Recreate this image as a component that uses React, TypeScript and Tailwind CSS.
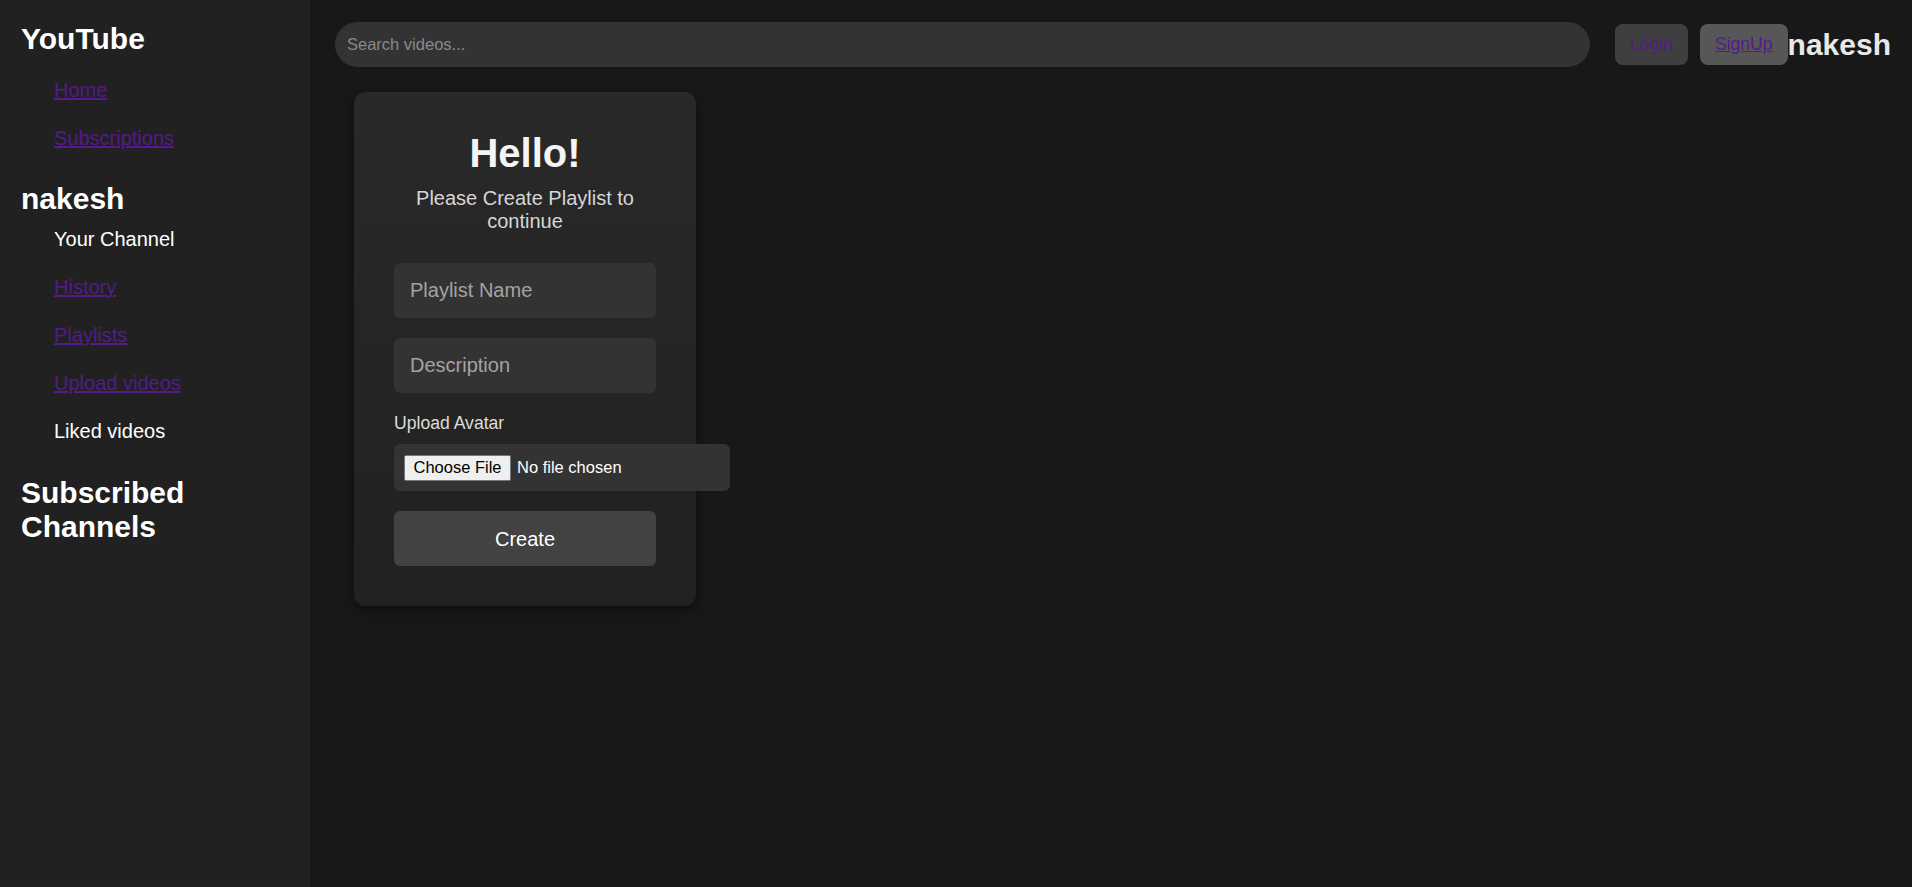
import { useState } from 'react'

const menuTop = [
  { label: 'Home', link: true },
  { label: 'Subscriptions', link: true },
]

const menuUser = [
  { label: 'Your Channel', link: false },
  { label: 'History', link: true },
  { label: 'Playlists', link: true },
  { label: 'Upload videos', link: true },
  { label: 'Liked videos', link: false },
]

function MenuList({ items, className }: { items: { label: string; link: boolean }[]; className: string }) {
  return (
    <ul className={`flex flex-col gap-[25px] pl-[33px] ${className}`}>
      {items.map((item) =>
        <li key={item.label} className="text-[20px] leading-[23px]">
          {item.link ? (
            <a href="#" className="text-[#551a8b] underline">{item.label}</a>
          ) : (
            <span className="text-white">{item.label}</span>
          )}
        </li>
      )}
    </ul>
  )
}

export default function App() {
  const [name, setName] = useState('')
  const [description, setDescription] = useState('')

  return (
    <div className="flex min-h-screen w-full bg-[#181818] font-['Liberation_Sans',Arial,sans-serif]">
      <aside className="w-[310px] shrink-0 bg-[#212121] pl-[21px] pt-[22px]">
        <h2 className="text-[30px] leading-[34px] font-bold text-white">YouTube</h2>
        <MenuList items={menuTop} className="mt-[23px]" />
        <h2 className="mt-[32px] text-[30px] leading-[34px] font-bold text-white">nakesh</h2>
        <MenuList items={menuUser} className="mt-[12px]" />
        <h2 className="mt-[33px] w-[200px] text-[30px] leading-[34px] font-bold text-white">Subscribed Channels</h2>
      </aside>

      <main className="flex-1 pl-[25px] pr-[21px] pt-[22px]">
        <header className="flex items-center">
          <input
            type="text"
            placeholder="Search videos..."
            className="h-[45px] flex-1 rounded-full bg-[#333333] pl-[12px] text-[16.5px] text-white outline-none placeholder:text-[#8a8a8a]"
          />
          <a href="#" className="ml-[25px] flex h-[41px] items-center rounded-[8px] bg-[#3f3f3f] px-[15px] text-[17.6px] text-[#551a8b] underline">Login</a>
          <a href="#" className="ml-[12px] flex h-[41px] items-center rounded-[8px] bg-[#575757] px-[15px] text-[17.6px] text-[#551a8b] underline">SignUp</a>
          <span className="text-[30px] leading-[32px] font-bold text-[#e8e8e8]">nakesh</span>
        </header>

        <div className="mt-[25px] ml-[19px] w-[342px] rounded-[12px] bg-gradient-to-b from-[#292929] to-[#212121] px-[40px] pt-[40px] pb-[40px] shadow-[0_4px_12px_rgba(0,0,0,0.45)]">
          <h1 className="text-center text-[40px] leading-[43px] font-bold text-[#f5f5f5]">Hello!</h1>
          <p className="mt-[12px] text-center text-[20px] leading-[23px] text-[#d6d6d6]">Please Create Playlist to continue</p>

          <input
            type="text"
            value={name}
            onChange={(e) => setName(e.target.value)}
            placeholder="Playlist Name"
            className="mt-[30px] block h-[55px] w-full rounded-[6px] bg-[#333333] px-[16px] text-[20px] text-white outline-none placeholder:text-[#a3a3a3]"
          />
          <input
            type="text"
            value={description}
            onChange={(e) => setDescription(e.target.value)}
            placeholder="Description"
            className="mt-[20px] block h-[55px] w-full rounded-[6px] bg-[#333333] px-[16px] text-[20px] text-white outline-none placeholder:text-[#a3a3a3]"
          />

          <label className="mt-[20px] block text-[17.6px] leading-[20px] text-[#dcdcdc]">Upload Avatar</label>
          <div className="mt-[11px] flex h-[47px] w-[336px] items-center rounded-[6px] bg-[#333333] pl-[10px]">
            <span className="flex h-[26px] w-[107px] items-center justify-center rounded-[2px] border border-[#767676] bg-[#efefef] text-[16.5px] text-black">Choose File</span>
            <span className="ml-[6px] text-[16.5px] text-white">No file chosen</span>
          </div>

          <button type="button" className="mt-[20px] block h-[55px] w-full rounded-[6px] bg-[#424242] text-[20px] text-white">Create</button>
        </div>
      </main>
    </div>
  )
}
